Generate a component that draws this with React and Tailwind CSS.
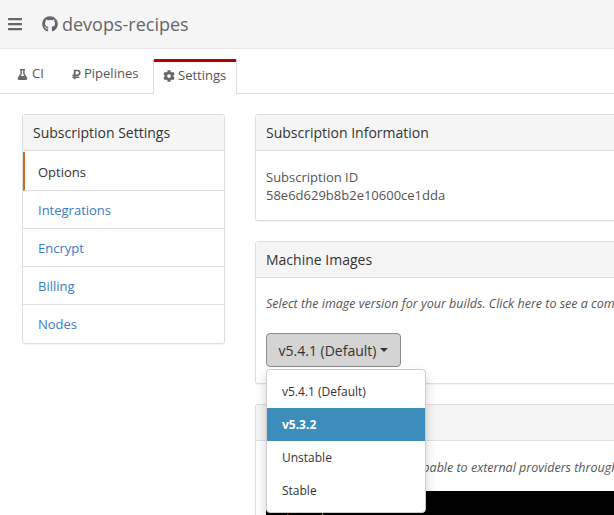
import React from "react";
import { FaBars, FaGithub, FaFlask, FaRubleSign, FaCog } from "react-icons/fa";

function Panel({ title, children, className = "" }) {
  return (
    <div className={"border border-[#ddd] rounded-[3px] bg-white w-[420px] shadow-[0_1px_1px_rgba(0,0,0,0.05)] " + className}>
      <div className="h-[36px] bg-[#f5f5f5] border-b border-[#ddd] pl-[10px] flex items-center text-[14px] text-[#333]">{title}</div>
      {children}
    </div>
  );
}

export default function App() {
  const items = ["Integrations", "Encrypt", "Billing", "Nodes"];
  return (
    <div className="relative w-[614px] h-[515px] overflow-hidden bg-white text-[#555] font-['Open_Sans',sans-serif]">
      <div className="h-[49px] bg-[#f5f5f5] border-b border-[#e7e7e7] flex items-center pl-[7px]">
        <FaBars className="w-[16px] h-[16px] text-[#666]" />
        <FaGithub className="ml-[19px] w-[16px] h-[16px] text-[#666]" />
        <span className="ml-[4px] text-[18px] text-[#666]">devops-recipes</span>
      </div>
      <div className="h-[45px] border-b border-[#ddd] flex items-end text-[13px] text-[#555]">
        <div className="h-[36px] mb-px ml-[17px] w-[38px] flex items-center gap-[4px]">
          <FaFlask className="w-[11px] h-[11px] text-[#666]" /><span>CI</span>
        </div>
        <div className="h-[36px] mb-px ml-[17px] w-[70px] flex items-center gap-[3px]">
          <FaRubleSign className="w-[9px] h-[11px] text-[#666]" /><span>Pipelines</span>
        </div>
        <div className="relative top-[1px] ml-[11px] w-[84px] h-[35px] bg-white border-x border-[#ddd] border-t-[3px] border-t-[#b30000] rounded-t-[2px] flex items-center pl-[9px] pb-[5px] gap-[3px]">
          <FaCog className="w-[12px] h-[12px] text-[#666]" /><span>Settings</span>
        </div>
      </div>
      <div className="flex items-start pl-[22px] pt-[20px]">
        <div className="w-[203px] shrink-0 border border-[#ddd] rounded-[3px] shadow-[0_1px_1px_rgba(0,0,0,0.05)]">
          <div className="h-[36px] bg-[#f5f5f5] border-b border-[#ddd] pl-[10px] flex items-center text-[14px] text-[#333]">Subscription Settings</div>
          <div className="h-[39px] border-b border-[#ddd] border-l-[2px] border-l-[#d9661f] mt-px pl-[13px] pt-[3px] flex items-center text-[13px] text-[#333]">Options</div>
          {items.map((t, i) => (
            <div key={t} className={"h-[38px] pl-[15px] pt-[2px] flex items-center text-[13px] text-[#3a7bc8] " + (i < 3 ? "border-b border-[#ddd]" : "")}>{t}</div>
          ))}
        </div>
        <div className="ml-[30px] flex flex-col gap-[20px] shrink-0">
          <Panel title="Subscription Information" className="h-[107px]">
            <div className="pl-[10px] pt-[17px] text-[13px] leading-[18px] text-[#555]">
              <div>Subscription ID</div>
              <div>58e6d629b8b2e10600ce1dda</div>
            </div>
          </Panel>
          <Panel title="Machine Images" className="h-[143px]">
            <div className="pl-[10px] pt-[17px]">
              <div className="text-[12.5px] leading-[17px] italic text-[#555] whitespace-nowrap">Select the image version for your builds. Click here to see a comparison</div>
              <div className="mt-[21px] w-[135px] h-[34px] bg-[#d4d4d4] border border-[#8c8c8c] rounded-[4px] flex items-center justify-center text-[14px] text-[#333] gap-[4px]">
                <span>v5.4.1 (Default)</span>
                <span className="w-0 h-0 border-x-[4px] border-x-transparent border-t-[4px] border-t-[#333]" />
              </div>
            </div>
          </Panel>
          <Panel title="Node Initialization" className="h-[200px]">
            <div className="pt-[18px]">
              <div className="pl-[10px] text-[12.5px] leading-[17px] italic text-[#555] whitespace-nowrap">Initialize node via a script capable to external providers through</div>
              <div className="mt-[15px] ml-[10px] h-[60px] bg-black pt-[18px] pl-[9px] text-[9px] leading-[18px] whitespace-pre text-[#ccc] font-['Liberation_Mono',monospace]">apt   sudo</div>
            </div>
          </Panel>
        </div>
      </div>
      <div className="absolute left-[266px] top-[369px] w-[160px] h-[144px] bg-white border border-[#ccc] rounded-[4px] shadow-[0_6px_12px_rgba(0,0,0,0.175)] py-[5px] text-[12px] text-[#333]">
        <div className="h-[33px] pl-[15px] flex items-center">v5.4.1 (Default)</div>
        <div className="h-[33px] pl-[15px] flex items-center bg-[#3c8dbc] text-white font-bold">v5.3.2</div>
        <div className="h-[33px] pl-[15px] flex items-center">Unstable</div>
        <div className="h-[33px] pl-[15px] flex items-center">Stable</div>
      </div>
    </div>
  );
}
